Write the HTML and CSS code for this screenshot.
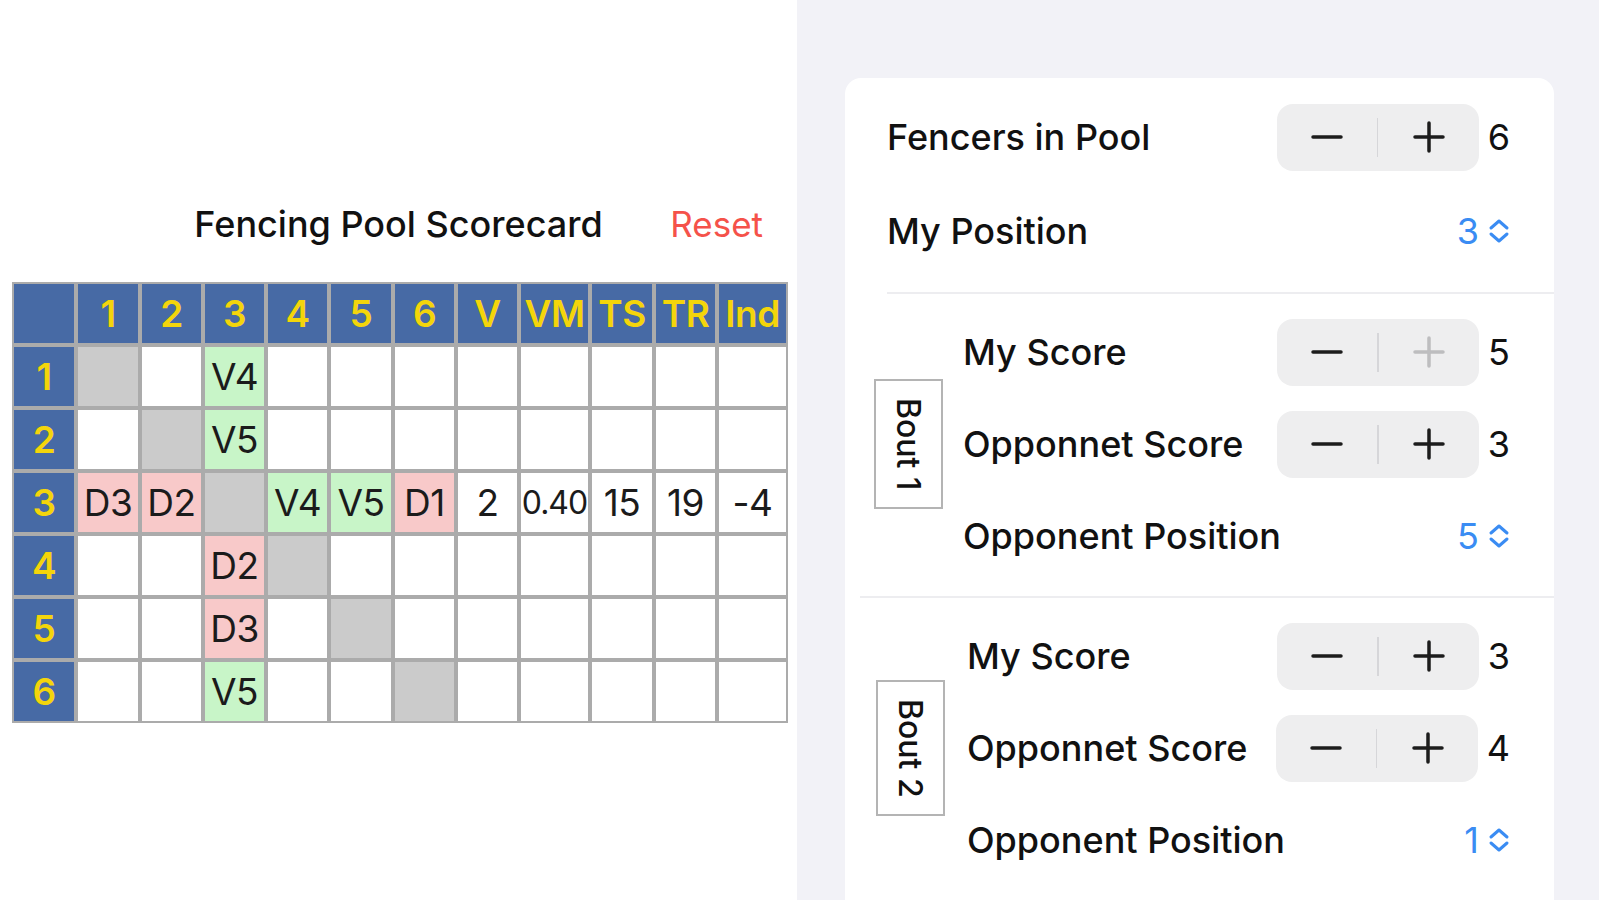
FILE: index.html
```html
<!DOCTYPE html>
<html lang="en">
<head>
<meta charset="utf-8">
<title>Fencing Pool Scorecard</title>
<link rel="stylesheet" href="styles.css">
</head>
<body>
<div class="app">
  <section class="scorecard">
    <header class="title-row">
      <span></span>
      <h1 class="title">Fencing Pool Scorecard</h1>
      <button class="reset">Reset</button>
    </header>
    <div class="pool-grid">
      <div class="cell h"></div><div class="cell h">1</div><div class="cell h">2</div><div class="cell h">3</div><div class="cell h">4</div><div class="cell h">5</div><div class="cell h">6</div><div class="cell h">V</div><div class="cell h">VM</div><div class="cell h">TS</div><div class="cell h">TR</div><div class="cell h">Ind</div>

      <div class="cell h">1</div><div class="cell x"></div><div class="cell"></div><div class="cell v">V4</div><div class="cell"></div><div class="cell"></div><div class="cell"></div><div class="cell"></div><div class="cell"></div><div class="cell"></div><div class="cell"></div><div class="cell"></div>

      <div class="cell h">2</div><div class="cell"></div><div class="cell x"></div><div class="cell v">V5</div><div class="cell"></div><div class="cell"></div><div class="cell"></div><div class="cell"></div><div class="cell"></div><div class="cell"></div><div class="cell"></div><div class="cell"></div>

      <div class="cell h">3</div><div class="cell d">D3</div><div class="cell d">D2</div><div class="cell x"></div><div class="cell v">V4</div><div class="cell v">V5</div><div class="cell d">D1</div><div class="cell">2</div><div class="cell sm">0.40</div><div class="cell">15</div><div class="cell">19</div><div class="cell">-4</div>

      <div class="cell h">4</div><div class="cell"></div><div class="cell"></div><div class="cell d">D2</div><div class="cell x"></div><div class="cell"></div><div class="cell"></div><div class="cell"></div><div class="cell"></div><div class="cell"></div><div class="cell"></div><div class="cell"></div>

      <div class="cell h">5</div><div class="cell"></div><div class="cell"></div><div class="cell d">D3</div><div class="cell"></div><div class="cell x"></div><div class="cell"></div><div class="cell"></div><div class="cell"></div><div class="cell"></div><div class="cell"></div><div class="cell"></div>

      <div class="cell h">6</div><div class="cell"></div><div class="cell"></div><div class="cell v">V5</div><div class="cell"></div><div class="cell"></div><div class="cell x"></div><div class="cell"></div><div class="cell"></div><div class="cell"></div><div class="cell"></div><div class="cell"></div>
    </div>
  </section>

  <aside class="settings">
    <div class="card">
      <div class="section top">
        <div class="row">
          <span class="label">Fencers in Pool</span>
          <div class="control">
            <div class="stepper">
              <span class="step"><svg width="32" height="32" viewBox="0 0 32 32"><path d="M2 16h28" class="ico"/></svg></span>
              <span class="sep"></span>
              <span class="step"><svg width="32" height="32" viewBox="0 0 32 32"><path d="M16 2v28M2 16h28" class="ico"/></svg></span>
            </div>
            <span class="value">6</span>
          </div>
        </div>
        <div class="row">
          <span class="label">My Position</span>
          <div class="picker"><span>3</span><svg width="22" height="26" viewBox="0 0 22 26"><path d="M3 10l8-7 8 7M3 16l8 7 8-7" class="chev"/></svg></div>
        </div>
      </div>

      <div class="section bout first">
        <div class="bout-tag">Bout 1</div>
        <div class="bout-rows">
          <div class="row">
            <span class="label">My Score</span>
            <div class="control">
              <div class="stepper">
                <span class="step"><svg width="32" height="32" viewBox="0 0 32 32"><path d="M2 16h28" class="ico"/></svg></span>
                <span class="sep"></span>
                <span class="step"><svg width="32" height="32" viewBox="0 0 32 32"><path d="M16 2v28M2 16h28" class="ico off"/></svg></span>
              </div>
              <span class="value">5</span>
            </div>
          </div>
          <div class="row">
            <span class="label">Opponnet Score</span>
            <div class="control">
              <div class="stepper">
                <span class="step"><svg width="32" height="32" viewBox="0 0 32 32"><path d="M2 16h28" class="ico"/></svg></span>
                <span class="sep"></span>
                <span class="step"><svg width="32" height="32" viewBox="0 0 32 32"><path d="M16 2v28M2 16h28" class="ico"/></svg></span>
              </div>
              <span class="value">3</span>
            </div>
          </div>
          <div class="row">
            <span class="label">Opponent Position</span>
            <div class="picker"><span>5</span><svg width="22" height="26" viewBox="0 0 22 26"><path d="M3 10l8-7 8 7M3 16l8 7 8-7" class="chev"/></svg></div>
          </div>
        </div>
      </div>

      <div class="section bout second">
        <div class="bout-tag">Bout 2</div>
        <div class="bout-rows">
          <div class="row">
            <span class="label">My Score</span>
            <div class="control">
              <div class="stepper">
                <span class="step"><svg width="32" height="32" viewBox="0 0 32 32"><path d="M2 16h28" class="ico"/></svg></span>
                <span class="sep"></span>
                <span class="step"><svg width="32" height="32" viewBox="0 0 32 32"><path d="M16 2v28M2 16h28" class="ico"/></svg></span>
              </div>
              <span class="value">3</span>
            </div>
          </div>
          <div class="row">
            <span class="label">Opponnet Score</span>
            <div class="control">
              <div class="stepper">
                <span class="step"><svg width="32" height="32" viewBox="0 0 32 32"><path d="M2 16h28" class="ico"/></svg></span>
                <span class="sep"></span>
                <span class="step"><svg width="32" height="32" viewBox="0 0 32 32"><path d="M16 2v28M2 16h28" class="ico"/></svg></span>
              </div>
              <span class="value">4</span>
            </div>
          </div>
          <div class="row">
            <span class="label">Opponent Position</span>
            <div class="picker"><span>1</span><svg width="22" height="26" viewBox="0 0 22 26"><path d="M3 10l8-7 8 7M3 16l8 7 8-7" class="chev"/></svg></div>
          </div>
        </div>
      </div>
    </div>
  </aside>
</div>
</body>
</html>
```

FILE: styles.css
```css
html, body {
  margin: 0;
  padding: 0;
}

body {
  font-family: Inter, "Noto Sans", "Liberation Sans", sans-serif;
  color: #111;
}

.app {
  display: flex;
  height: 900px;
  overflow: hidden;
}

/* ---------- left: scorecard ---------- */
.scorecard {
  width: 797px;
  flex: none;
  background: #fff;
  padding-top: 200px;
  box-sizing: border-box;
}

.title-row {
  display: grid;
  grid-template-columns: 1fr auto 1fr;
  align-items: center;
  height: 48px;
  margin-bottom: 34px;
}

.title {
  margin: 0;
  font-size: 36px;
  font-weight: 500;
  line-height: 48px;
  color: #111;
}

.reset {
  justify-self: end;
  margin-right: 34px;
  padding: 0;
  border: 0;
  background: none;
  font-family: inherit;
  font-size: 35px;
  font-weight: 400;
  color: #f5524a;
}

.pool-grid {
  margin-left: 12px;
  display: grid;
  grid-template-columns: 64px 64px 63px 63px 63px 64px 63px 63px 71px 64px 63px 71px;
  grid-auto-rows: 63px;
  width: 776px;
}

.cell {
  box-sizing: border-box;
  border: 2px solid #ababab;
  background: #fff;
  display: flex;
  align-items: center;
  justify-content: center;
  font-size: 37px;
  color: #1b1b1b;
  overflow: hidden;
  white-space: nowrap;
  letter-spacing: -0.5px;
}

.cell.h {
  background: #476aa5;
  color: #f4d50b;
  font-weight: 600;
}

.cell.x { background: #cbcbcb; }
.cell.v { background: #c8f5c8; }
.cell.d { background: #f8c9c9; }
.cell.sm { font-size: 32px; letter-spacing: -1px; }

/* ---------- right: settings ---------- */
.settings {
  flex: 1;
  background: #f2f2f7;
  padding: 78px 45px 0 48px;
}

.card {
  background: #fff;
  border-radius: 16px 16px 0 0;
  padding-top: 12px;
  min-height: 900px;
}

.section.top {
  margin-left: 42px;
  padding-bottom: 14px;
  border-bottom: 2px solid #ededf0;
}

.row {
  display: flex;
  align-items: center;
  justify-content: space-between;
  height: 94px;
  padding-right: 44px;
}

.label {
  font-size: 36px;
  font-weight: 500;
  color: #111;
  white-space: nowrap;
}

.control {
  display: flex;
  align-items: center;
  gap: 9px;
}

.stepper {
  display: flex;
  align-items: center;
  width: 202px;
  height: 67px;
  background: #eeeeef;
  border-radius: 16px;
}

.step {
  flex: 1;
  height: 100%;
  display: flex;
  align-items: center;
  justify-content: center;
}

.sep {
  width: 1.5px;
  height: 39px;
  background: #d6d6d9;
}

.ico {
  fill: none;
  stroke: #1c1c1c;
  stroke-width: 3.5;
  stroke-linecap: round;
}

.ico.off {
  stroke: #bdbdbf;
}

.value {
  font-size: 36px;
  min-width: 22px;
  text-align: right;
  color: #111;
}

.picker {
  display: flex;
  align-items: center;
  gap: 9px;
  color: #3a8cf3;
  font-size: 36px;
}

.chev {
  fill: none;
  stroke: #3a8cf3;
  stroke-width: 3;
  stroke-linecap: round;
  stroke-linejoin: round;
}

.section.bout {
  margin-left: 15px;
  padding: 12px 0 14px 14px;
  display: flex;
  align-items: center;
}

.section.bout.first {
  border-bottom: 2px solid #ededf0;
}

.section.bout.second {
  padding-left: 16px;
}

.bout-tag {
  writing-mode: vertical-rl;
  border: 2px solid #b4b4b4;
  padding: 17px 13px;
  font-size: 32px;
  font-weight: 500;
  line-height: 39px;
  color: #111;
  white-space: nowrap;
}

.bout-rows {
  flex: 1;
  margin-left: 20px;
}

.second .bout-rows {
  margin-left: 22px;
}

.bout .row {
  height: 92px;
}
```
